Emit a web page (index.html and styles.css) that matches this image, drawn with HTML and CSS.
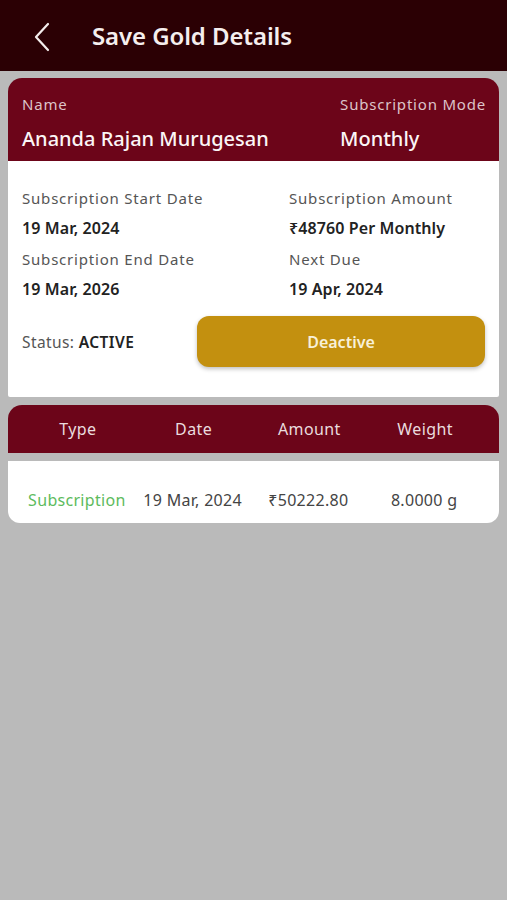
FILE: index.html
```html
<!DOCTYPE html>
<html lang="en">
<head>
    <meta charset="UTF-8">
    <meta name="viewport" content="width=device-width, initial-scale=1.0">
    <title>Save Gold Details</title>
    <link rel="stylesheet" href="styles.css">
</head>
<body>
    <header class="topbar">
        <button class="back" aria-label="Back">
            <svg width="18" height="30" viewBox="0 0 18 30"><path d="M15 2 L3 15 L15 28" fill="none" stroke="#f3ecec" stroke-width="2.2" stroke-linecap="round" stroke-linejoin="round"/></svg>
        </button>
        <h1>Save Gold Details</h1>
    </header>

    <main class="content">
        <section class="card">
            <div class="card-head">
                <div class="col">
                    <p class="head-label">Name</p>
                    <p class="head-value">Ananda Rajan Murugesan</p>
                </div>
                <div class="col">
                    <p class="head-label">Subscription Mode</p>
                    <p class="head-value">Monthly</p>
                </div>
            </div>
            <div class="card-body">
                <div class="info-grid">
                    <div class="info">
                        <p class="label">Subscription Start Date</p>
                        <p class="value">19 Mar, 2024</p>
                    </div>
                    <div class="info">
                        <p class="label">Subscription Amount</p>
                        <p class="value">₹48760 Per Monthly</p>
                    </div>
                    <div class="info">
                        <p class="label">Subscription End Date</p>
                        <p class="value">19 Mar, 2026</p>
                    </div>
                    <div class="info">
                        <p class="label">Next Due</p>
                        <p class="value">19 Apr, 2024</p>
                    </div>
                </div>
                <div class="status-row">
                    <p class="status">Status: <b>ACTIVE</b></p>
                    <button class="btn">Deactive</button>
                </div>
            </div>
        </section>

        <section class="history">
            <div class="history-head">
                <span>Type</span>
                <span>Date</span>
                <span>Amount</span>
                <span>Weight</span>
            </div>
            <div class="history-row">
                <span class="type">Subscription</span>
                <span>19 Mar, 2024</span>
                <span>₹50222.80</span>
                <span>8.0000 g</span>
            </div>
        </section>
    </main>
</body>
</html>
```

FILE: styles.css
```css
*{
    margin: 0;
    padding: 0;
    box-sizing: border-box;
    font-family: 'Noto Sans', 'Open Sans', sans-serif;
}
body {
    background-color: #bababa;
    min-height: 900px;
}
.topbar {
    height: 71px;
    background-color: #2b0004;
    display: flex;
    align-items: center;
    padding-left: 33px;
}
.back {
    background: transparent;
    border: none;
    display: flex;
    margin-right: 41px;
    margin-top: 2px;
}
.topbar h1 {
    color: #f5eeee;
    font-size: 24px;
    font-weight: 600;
    letter-spacing: -0.1px;
}
.content {
    padding: 7px 8px;
}
.card {
    border-radius: 14px 14px 2px 2px;
    overflow: hidden;
}
.card-head {
    background-color: #6c0519;
    display: flex;
    justify-content: space-between;
    padding: 16px 13px 9px 14px;
}
.head-label {
    color: #dcc4c9;
    font-size: 15px;
    line-height: 20px;
    letter-spacing: 0.8px;
    margin-bottom: 12px;
}
.head-value {
    color: #fbf6f6;
    font-size: 20px;
    font-weight: 500;
    line-height: 26px;
}
.card-body {
    background-color: #fff;
    padding: 27px 14px 30px 14px;
}
.info-grid {
    display: grid;
    grid-template-columns: 267px 1fr;
    row-gap: 10px;
}
.label {
    color: #555;
    font-size: 15px;
    line-height: 20px;
    letter-spacing: 0.8px;
    margin-bottom: 9px;
}
.value {
    color: #222;
    font-size: 16px;
    font-weight: 600;
    line-height: 22px;
    letter-spacing: 0.1px;
}
.status-row {
    display: flex;
    align-items: center;
    justify-content: space-between;
    margin-top: 16px;
}
.status {
    color: #555;
    font-size: 15.5px;
    letter-spacing: 0.4px;
}
.status b {
    color: #222;
    font-weight: 600;
}
.btn {
    width: 288px;
    height: 51px;
    border: none;
    border-radius: 12px;
    background-color: #c3900f;
    color: #f8f0d8;
    font-size: 16px;
    font-weight: 600;
    box-shadow: 0 2px 4px rgba(0,0,0,0.25);
    cursor: pointer;
}
.history {
    margin-top: 8px;
}
.history-head {
    height: 48px;
    background-color: #6c0519;
    border-radius: 14px 14px 0 0;
    display: grid;
    grid-template-columns: repeat(4, 1fr);
    align-items: center;
    padding: 0 16px 0 12px;
    color: #eadcdf;
    font-size: 16px;
    letter-spacing: 0.4px;
    text-align: center;
}
.history-row {
    margin-top: 8px;
    height: 62px;
    background-color: #fff;
    border-radius: 0 0 12px 12px;
    display: grid;
    grid-template-columns: repeat(4, 1fr);
    padding: 28px 17px 0 11px;
    color: #444;
    font-size: 16px;
    line-height: 22px;
    letter-spacing: 0.3px;
    text-align: center;
}
.history-row .type {
    color: #5dbb5d;
}
```
